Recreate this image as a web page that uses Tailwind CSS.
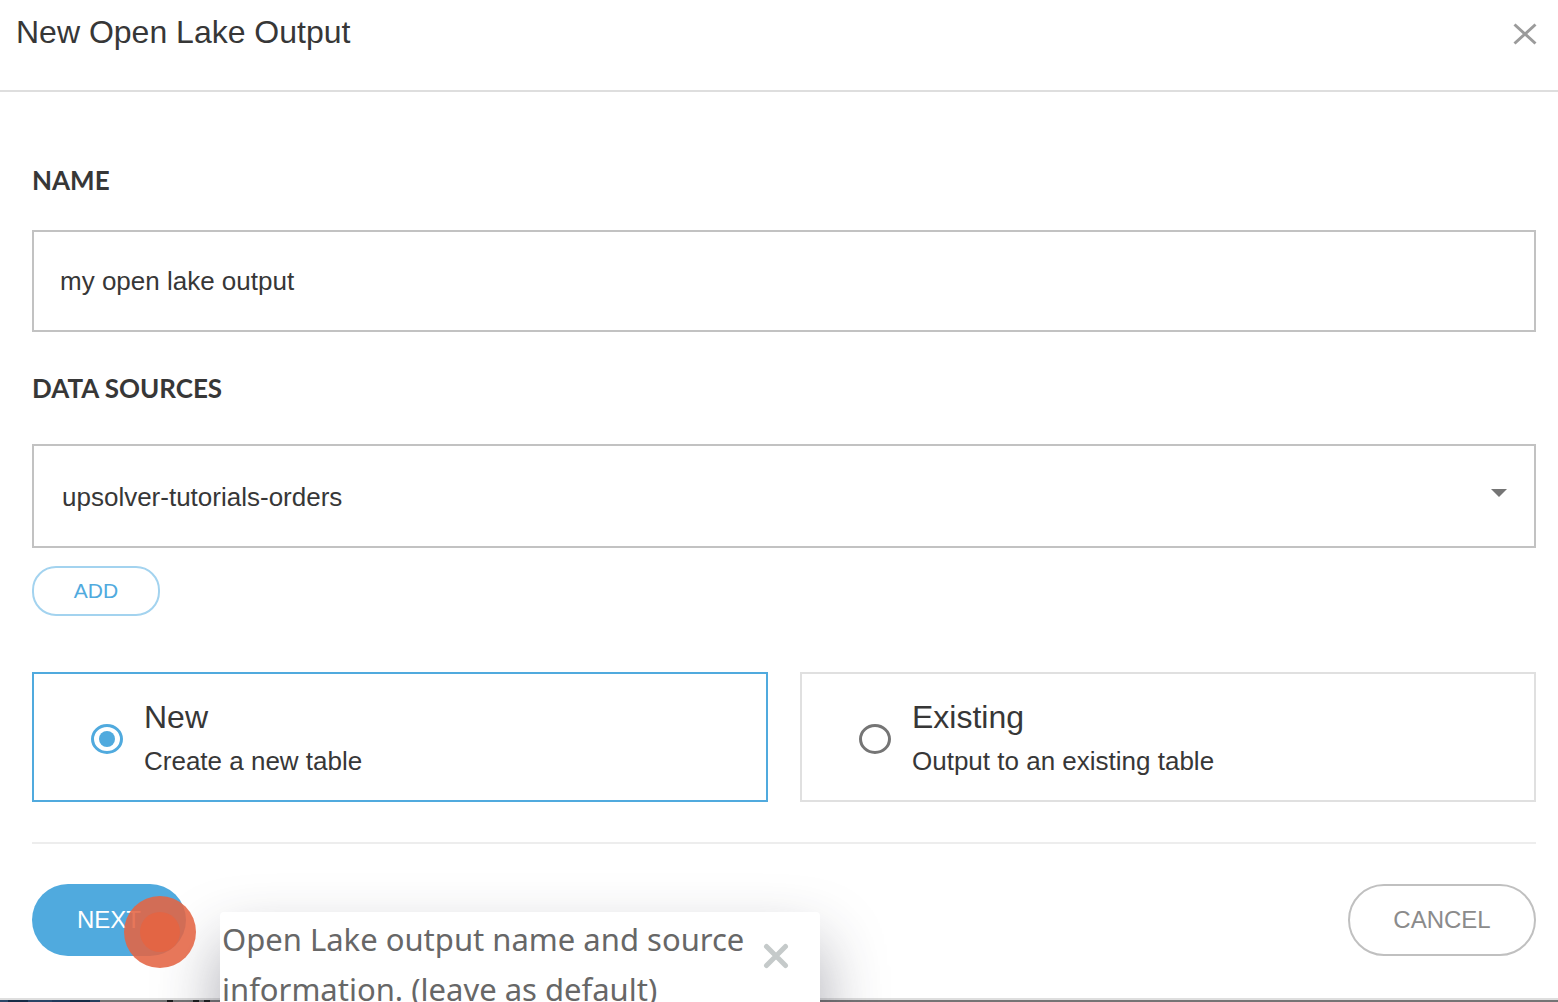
<!DOCTYPE html>
<html lang="en">
<head>
<meta charset="utf-8">
<meta name="viewport" content="width=device-width, initial-scale=1">
<title>New Open Lake Output</title>
<script src="https://cdn.jsdelivr.net/npm/@tailwindcss/browser@4"></script>
</head>
<body class="relative h-screen overflow-hidden bg-[#757475] font-['Liberation_Sans',Arial,sans-serif] text-[#373737]">
  <div role="dialog" aria-labelledby="title" class="border-b-2 border-[#dedede] bg-white">
    <header class="flex items-start justify-between border-b-2 border-[#dedede] pt-2 pr-5 pb-[34px] pl-4">
      <h1 id="title" class="text-[32px] leading-12">New Open Lake Output</h1>
      <button type="button" aria-label="Close" class="mt-3">
        <svg class="size-7" viewBox="0 0 28 28" fill="none" stroke="#9b9b9b" stroke-width="3"><path d="M4.500 4.500 25.500 23.500M25.500 4.500 4.500 23.500"/></svg>
      </button>
    </header>

    <form class="pt-18 pr-[22px] pb-[42px] pl-8">
      <label for="name" class="block font-[Lato,sans-serif] text-[26px] leading-8 font-bold">NAME</label>
      <input id="name" type="text" value="my open lake output" class="mt-[34px] block h-[102px] w-full border-2 border-[#c2c2c2] px-[26px] text-[26px] outline-none">

      <label for="sources" class="mt-10 block font-[Lato,sans-serif] text-[26px] leading-8 font-bold">DATA SOURCES</label>
      <div class="relative mt-10">
        <select id="sources" class="block h-[104px] w-full appearance-none border-2 border-[#c2c2c2] bg-white px-7 pt-0.5 text-[26px] outline-none">
          <option>upsolver-tutorials-orders</option>
        </select>
        <svg class="pointer-events-none absolute top-[45px] right-[29px] h-2 w-4" viewBox="0 0 16 8" fill="#757575"><path d="M0 0h16L8 8z"/></svg>
      </div>
      <button type="button" class="mt-[18px] block h-[50px] w-32 rounded-3xl border-2 border-[#a3d3ef] text-[21px] text-[#50aade]">ADD</button>

      <div class="mt-14 grid grid-cols-2 gap-8">
        <label class="flex h-[130px] items-center gap-[21px] border-2 border-[#50aade] pt-1 pl-[57px]">
          <input type="radio" name="mode" checked class="grid h-[30px] w-8 appearance-none place-items-center rounded-[50%] border-3 border-[#50aade] before:h-4 before:w-4 before:rounded-[50%] before:bg-[#50aade]">
          <span class="grid">
            <span class="text-[32px] leading-11">New</span>
            <span class="text-[26px] leading-11">Create a new table</span>
          </span>
        </label>
        <label class="flex h-[130px] items-center gap-[21px] border-2 border-[#e0e0e0] pt-1 pl-[57px]">
          <input type="radio" name="mode" class="h-[30px] w-8 appearance-none rounded-[50%] border-3 border-[#757575]">
          <span class="grid">
            <span class="text-[32px] leading-11">Existing</span>
            <span class="text-[26px] leading-11">Output to an existing table</span>
          </span>
        </label>
      </div>

      <div class="mt-10 flex justify-between border-t-2 border-[#ededed] pt-10">
        <div class="relative">
          <button type="button" class="block h-18 w-[154px] rounded-full bg-[#50aade] text-2xl text-white">NEXT</button>
          <aside class="absolute top-7 left-[188px] flex w-[600px] items-start justify-between rounded-[4px] bg-white pt-0.5 pr-[31px] pb-5 pl-0.5 shadow-[0_32px_64px_0_rgba(40,40,60,0.4)]">
            <p class="w-[535px] font-['Noto_Sans',sans-serif] text-[31px] leading-[50px] text-[#676767]">Open Lake output name and source information. (leave as default)</p>
            <button type="button" aria-label="Dismiss tip" class="mt-[29px]">
              <svg class="size-[26px]" viewBox="0 0 26 26" fill="none" stroke="#c5caca" stroke-width="5" stroke-linecap="round"><path d="M3.500 3.500l19 19M22.500 3.500l-19 19"/></svg>
            </button>
          </aside>
          <span class="pointer-events-none absolute top-3 left-[92px] grid size-18 place-items-center rounded-full bg-[#e46443]/88"><span class="size-10 rounded-full bg-[#e46443]/90"></span></span>
        </div>
        <button type="button" class="h-18 w-[188px] rounded-full border-2 border-[#c0c0c0] text-2xl text-[#8b8b8b]">CANCEL</button>
      </div>
    </form>
  </div>
  <div class="flex h-2" aria-hidden="true">
    <span class="w-2 bg-[#2c4869]"></span><span class="w-5 bg-[#162b46]"></span><span class="w-6 bg-[#294466]"></span><span class="w-[18px] bg-[#20395b]"></span><span class="w-5 bg-[#162b46]"></span><span class="w-2.5 bg-[#26405f]"></span>
    <span class="ml-[67px] w-1.5 bg-[#1c1c1c]"></span><span class="ml-5 w-1.5 bg-[#1c1c1c]"></span><span class="ml-[5px] w-1.5 bg-[#1c1c1c]"></span>
  </div>
</body>
</html>
